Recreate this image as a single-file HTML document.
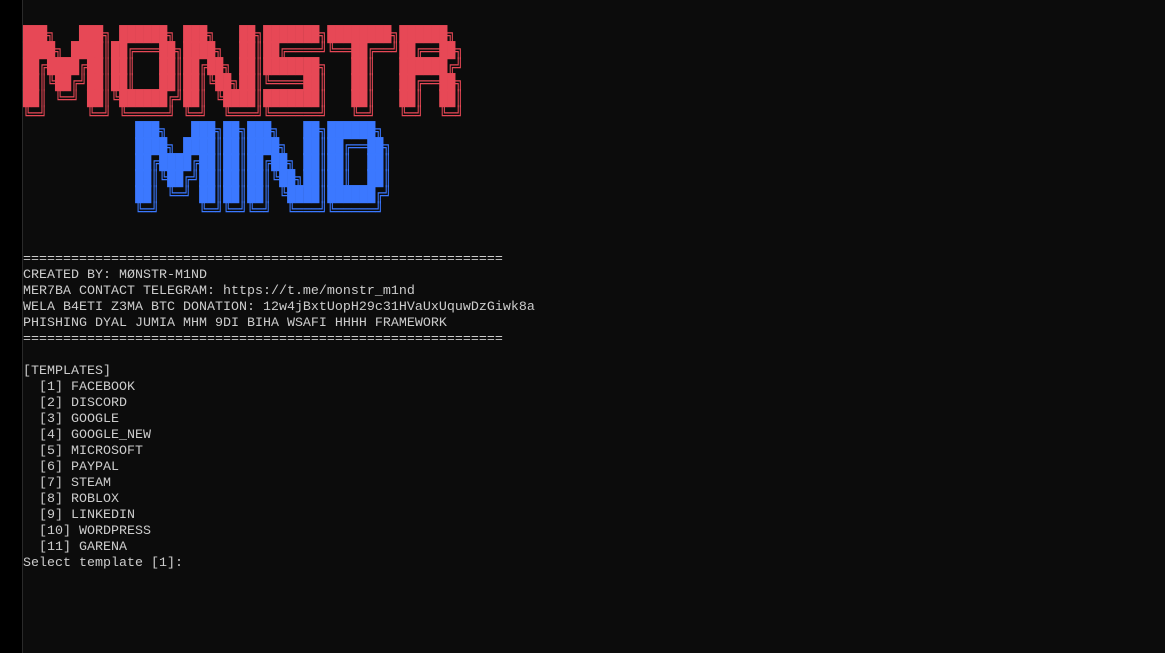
<!DOCTYPE html>
<html><head><meta charset="utf-8"><style>
html,body{margin:0;padding:0;width:1165px;height:653px;overflow:hidden;background:#0c0c0c;}
.strip{position:absolute;left:0;top:0;width:22px;height:653px;background:#000;border-right:1px solid #2a2a2a;}
.logo{position:absolute;left:23px;top:28px;font-family:"DejaVu Sans Mono",monospace;font-size:13.3px;}
.logo div{height:16px;line-height:16px;white-space:pre;transform:scaleY(1.15);transform-origin:50% 50%;}
.txt{position:absolute;left:23px;top:252px;font-family:"Liberation Mono","DejaVu Sans Mono",monospace;font-size:13.33px;color:#cccccc;}
.txt div{height:16px;line-height:16px;white-space:pre;}
.r{color:#e74856;}
.b{color:#3b78ff;}
</style></head><body>
<div class="strip"></div>
<div class="logo">
<div class="r">███╗   ███╗ ██████╗ ███╗   ██╗███████╗████████╗██████╗ </div>
<div class="r">████╗ ████║██╔═══██╗████╗  ██║██╔════╝╚══██╔══╝██╔══██╗</div>
<div class="r">██╔████╔██║██║   ██║██╔██╗ ██║███████╗   ██║   ██████╔╝</div>
<div class="r">██║╚██╔╝██║██║   ██║██║╚██╗██║╚════██║   ██║   ██╔══██╗</div>
<div class="r">██║ ╚═╝ ██║╚██████╔╝██║ ╚████║███████║   ██║   ██║  ██║</div>
<div class="r">╚═╝     ╚═╝ ╚═════╝ ╚═╝  ╚═══╝╚══════╝   ╚═╝   ╚═╝  ╚═╝</div>
<div class="b">              ███╗   ███╗██╗███╗   ██╗██████╗ </div>
<div class="b">              ████╗ ████║██║████╗  ██║██╔══██╗</div>
<div class="b">              ██╔████╔██║██║██╔██╗ ██║██║  ██║</div>
<div class="b">              ██║╚██╔╝██║██║██║╚██╗██║██║  ██║</div>
<div class="b">              ██║ ╚═╝ ██║██║██║ ╚████║██████╔╝</div>
<div class="b">              ╚═╝     ╚═╝╚═╝╚═╝  ╚═══╝╚═════╝ </div>
</div>
<div class="txt">
<div>============================================================</div>
<div>CREATED BY: MØNSTR-M1ND</div>
<div>MER7BA CONTACT TELEGRAM: https://t.me/monstr_m1nd</div>
<div>WELA B4ETI Z3MA BTC DONATION: 12w4jBxtUopH29c31HVaUxUquwDzGiwk8a</div>
<div>PHISHING DYAL JUMIA MHM 9DI BIHA WSAFI HHHH FRAMEWORK</div>
<div>============================================================</div>
<div> </div>
<div>[TEMPLATES]</div>
<div>  [1] FACEBOOK</div>
<div>  [2] DISCORD</div>
<div>  [3] GOOGLE</div>
<div>  [4] GOOGLE_NEW</div>
<div>  [5] MICROSOFT</div>
<div>  [6] PAYPAL</div>
<div>  [7] STEAM</div>
<div>  [8] ROBLOX</div>
<div>  [9] LINKEDIN</div>
<div>  [10] WORDPRESS</div>
<div>  [11] GARENA</div>
<div>Select template [1]: </div>
</div>
</body></html>
